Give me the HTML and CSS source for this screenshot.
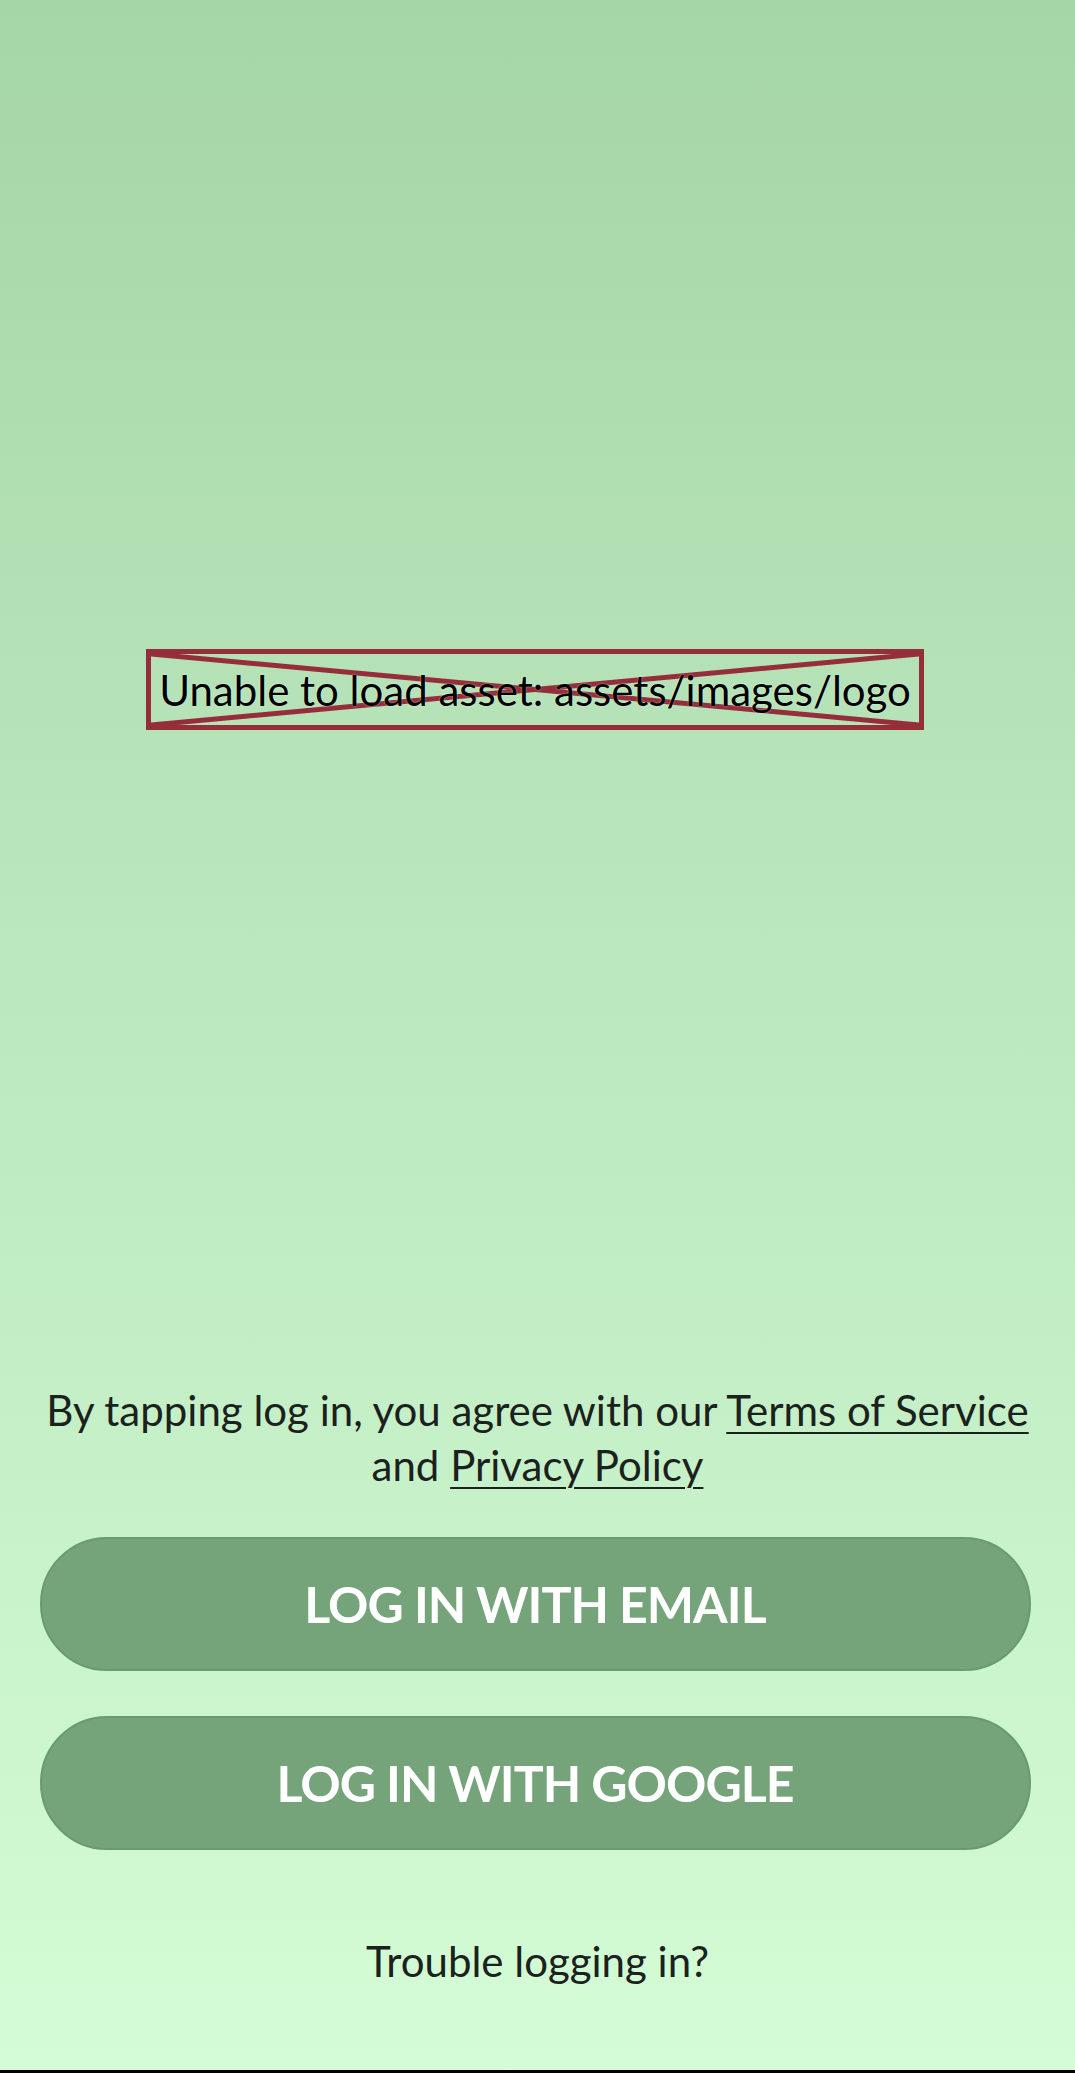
FILE: index.html
```html
<!DOCTYPE html>
<html lang="en">
<head>
<meta charset="utf-8">
<title>Login</title>
<link rel="stylesheet" href="styles.css">
</head>
<body>
<main class="screen">
  <section class="hero">
    <div class="asset-error">
      <svg class="asset-x" viewBox="0 0 768 71" preserveAspectRatio="none" aria-hidden="true">
        <line x1="0" y1="0" x2="768" y2="71" />
        <line x1="768" y1="0" x2="0" y2="71" />
      </svg>
      <span class="asset-text">Unable to load asset: assets/images/logo</span>
    </div>
  </section>
  <section class="actions">
    <p class="terms">By tapping log in, you agree with our <a href="#" class="link">Terms of Service</a> and <a href="#" class="link">Privacy Policy</a></p>
    <button class="btn">LOG IN WITH EMAIL</button>
    <button class="btn">LOG IN WITH GOOGLE</button>
    <a href="#" class="trouble">Trouble logging in?</a>
  </section>
</main>
</body>
</html>
```
FILE: styles.css
```css
* { box-sizing: border-box; }
html, body { margin: 0; padding: 0; }
body {
  width: 1075px;
  height: 2073px;
  font-family: Lato, "Open Sans", sans-serif;
  color: #1b211c;
}
.screen {
  height: 2073px;
  display: flex;
  flex-direction: column;
  background: linear-gradient(180deg, #a5d6a7 0%, #d4fcd6 100%);
  border-bottom: 3px solid #000;
}
.hero {
  height: 1379px;
  display: flex;
  align-items: center;
  justify-content: center;
}
.asset-error {
  position: relative;
  width: 778px;
  height: 81px;
  border: 5px solid #962d3b;
  display: flex;
  align-items: center;
  justify-content: center;
  margin-left: -5px;
}
.asset-x {
  position: absolute;
  inset: 0;
  width: 100%;
  height: 100%;
}
.asset-x line {
  stroke: #962d3b;
  stroke-width: 5;
  vector-effect: non-scaling-stroke;
}
.asset-text {
  position: relative;
  font-size: 42px;
  color: #000;
  white-space: nowrap;
  text-shadow: 0 0 2px rgba(255,255,255,0.6);
}
.actions {
  flex: 1;
  display: flex;
  flex-direction: column;
  align-items: center;
}
.terms {
  margin: 4px 0 0;
  width: 1075px;
  padding: 0 42px;
  text-align: center;
  font-size: 42px;
  line-height: 55px;
}
.link {
  color: inherit;
  text-decoration: underline;
  text-underline-offset: 6px;
  text-decoration-thickness: 2px;
}
.btn {
  margin: 44px 5px 0 0;
  width: 991px;
  height: 134px;
  border-radius: 67px;
  border: 2px solid #6a9a6f;
  background: #75a47a;
  color: #fff;
  font-family: Lato, "Open Sans", sans-serif;
  font-weight: 700;
  font-size: 50px;
  letter-spacing: -1px;
  padding: 0;
}
.btn + .btn { margin-top: 45px; }
.trouble {
  margin-top: 86px;
  font-size: 42px;
  color: #1b211c;
  text-decoration: none;
}
```
